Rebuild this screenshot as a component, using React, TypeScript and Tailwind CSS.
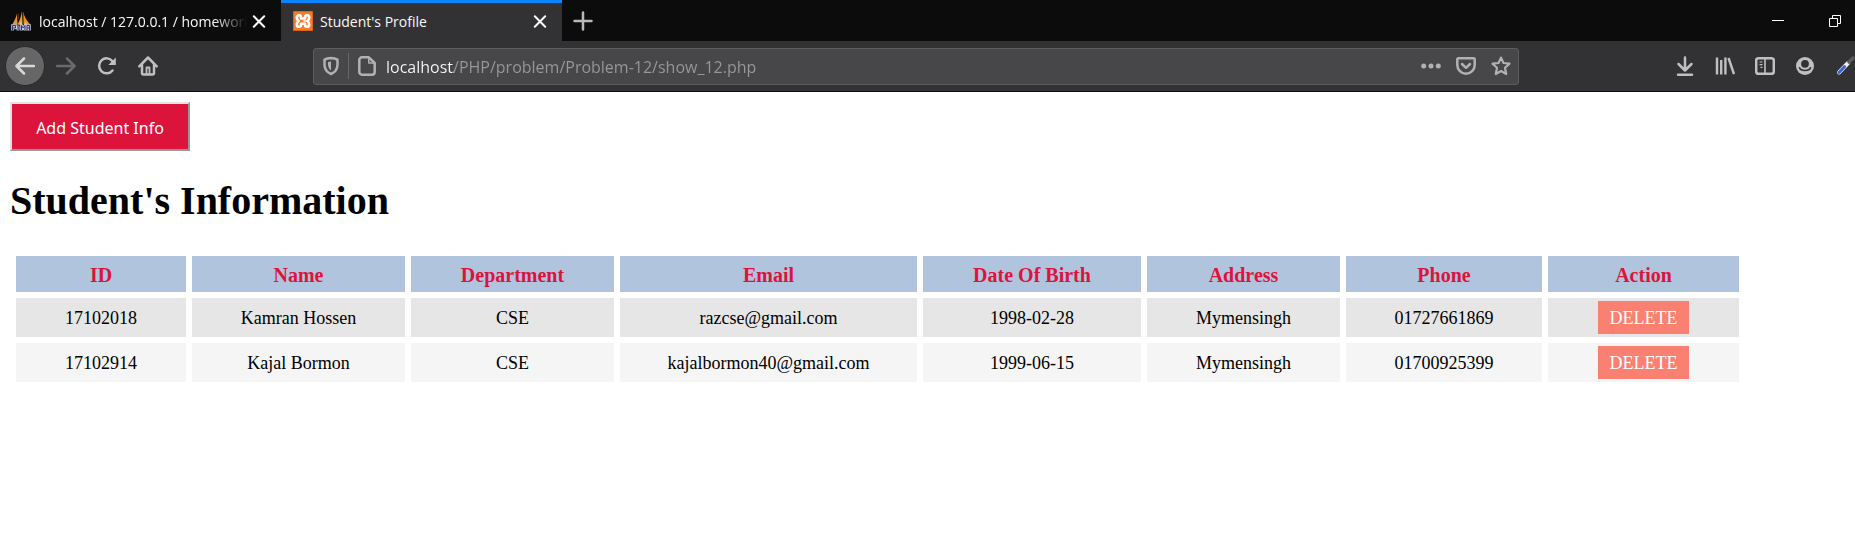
import React from "react";

type IconProps = { children: React.ReactNode; size?: string };

function Icon({ children, size = "size-5" }: IconProps) {
  return (
    <svg
      viewBox="0 0 20 20"
      className={`${size} shrink-0`}
      fill="none"
      stroke="currentColor"
      strokeWidth="2.5"
      strokeLinecap="round"
      strokeLinejoin="round"
      aria-hidden="true"
    >
      {children}
    </svg>
  );
}

function CloseIcon() {
  return (
    <Icon>
      <path d="M4.8 5.3 15.2 15.7M15.2 5.3 4.8 15.7" strokeWidth="2" />
    </Icon>
  );
}

function SailsLogo() {
  return (
    <svg viewBox="0 0 20 20" className="size-5 shrink-0" aria-hidden="true">
      <path d="M5.8 2.8 6.6 13.5H1.2C3.4 10 5 7 5.8 2.8Z" fill="#e8963a" />
      <path d="M10.8 0 11.6 13.8H6.4C9 9 10.4 5 10.8 0Z" fill="#f5a02c" />
      <path d="M12.3 1.5C13.5 6 16 10 19.3 13.500L12.8 13.800Z" fill="#f08c1a" />
      <path d="M7 2.5 7.4 8M12.2 1 12.4 12.5" stroke="#a9651c" strokeWidth=".6" />
      <g fill="none" stroke="#c6c8e4" strokeWidth="2.6">
        <path d="M1.5 19.5V14.5H4.5V17H2M7 19.5V14.5M7 17H9.5M10.5 19.5V14.5L12.3 17 14 14.5V19.5M16 19.5V14.5H18.5V19.5M16 17H18.5" />
      </g>
      <g fill="none" stroke="#33345c" strokeWidth="1">
        <path d="M1.5 19.5V14.5H4.5V17H2M7 19.5V14.5M7 17H9.5M10.5 19.5V14.5L12.3 17 14 14.5V19.5M16 19.5V14.5H18.5V19.5M16 17H18.5" />
      </g>
    </svg>
  );
}

function XamppLogo() {
  return (
    <svg viewBox="0 0 20 20" className="size-5 shrink-0" aria-hidden="true">
      <rect width="20" height="20" rx="1" fill="#d9651b" />
      <rect x="1" y="1" width="18" height="18" rx="1" fill="#f57c2b" />
      <g fill="none" stroke="#fff" strokeWidth="2.6" strokeLinecap="round" strokeLinejoin="round">
        <path d="M8 7.5V6.300C8 4.900 7.200 4.300 6 4.300 4.600 4.300 3.800 5.200 3.800 6.600 3.800 8.300 4.600 9.300 5.600 10 4.600 10.700 3.800 11.700 3.800 13.400 3.800 14.800 4.600 15.700 6 15.700 7.200 15.700 8 15.100 8 13.700V12.800H12V13.700C12 15.100 12.800 15.700 14 15.700 15.400 15.700 16.200 14.800 16.200 13.400 16.200 11.700 15.400 10.700 14.400 10 15.400 9.300 16.200 8.300 16.200 6.600 16.200 5.200 15.400 4.300 14 4.300 12.800 4.300 12 4.900 12 6.300V7.500Z" />
        <path d="M11 10H14" strokeWidth="1.600" />
      </g>
    </svg>
  );
}

function TabStrip() {
  return (
    <div className="flex h-[41px] bg-[#0c0c0d] text-[14px] text-[#f9f9fa]">
      <div className="flex w-[281px] shrink-0 items-center pr-3 pl-[11px]">
        <SailsLogo />
        <a
          href="#phpmyadmin"
          className="ml-2 w-[208px] overflow-hidden pt-0.5 whitespace-nowrap [mask-image:linear-gradient(to_right,black_84%,transparent)]"
        >
          localhost / 127.0.0.1 / homework
        </a>
        <button type="button" aria-label="Close tab" className="ml-auto">
          <CloseIcon />
        </button>
      </div>
      <div className="flex w-[281px] shrink-0 items-center border-t-[3px] border-[#0a84ff] bg-[#323234] pr-3 pb-[3px] pl-3">
        <XamppLogo />
        <a href="#profile" className="ml-[7px] pt-0.5 whitespace-nowrap">
          Student's Profile
        </a>
        <button type="button" aria-label="Close tab" className="ml-auto">
          <CloseIcon />
        </button>
      </div>
      <button
        type="button"
        aria-label="New tab"
        className="flex w-[41px] shrink-0 items-center justify-center text-[#b9b9ba]"
      >
        <Icon>
          <path d="M10 1.5V18.5M1.5 10H18.5" />
        </Icon>
      </button>
      <div className="ml-auto flex overflow-hidden">
        <button type="button" aria-label="Minimize" className="flex w-14 items-center justify-center text-white">
          <svg viewBox="0 0 12 12" className="size-3" aria-hidden="true">
            <path d="M0 5.5H12" stroke="currentColor" />
          </svg>
        </button>
        <button type="button" aria-label="Restore" className="flex w-[49px] items-center justify-center pl-2 text-white">
          <svg viewBox="0 0 12 12" className="size-3" fill="none" stroke="currentColor" aria-hidden="true">
            <path d="M.5 3.5H8.5V11.5H.5ZM3.5 3.5V.5H11.5V8.5H8.5" />
          </svg>
        </button>
      </div>
    </div>
  );
}

function ToolButton({
  label,
  width = "w-10",
  children,
}: {
  label: string;
  width?: string;
  children: React.ReactNode;
}) {
  return (
    <button
      type="button"
      aria-label={label}
      className={`${width} flex h-10 shrink-0 items-center justify-center`}
    >
      <Icon>{children}</Icon>
    </button>
  );
}

function AddressBar() {
  return (
    <div className="flex h-[37px] min-w-0 flex-1 items-center rounded-[3px] border border-[#5c5c5f] bg-[#474749] text-[#b1b1b2]">
      <ToolButton label="Tracking protection" width="w-[34px]">
        <path d="M10 2C12.5 2.2 14.7 2.7 16.500 3.6V8.5C16.500 13 14 16.3 10 18 6 16.3 3.500 13 3.500 8.500V3.600C5.300 2.700 7.500 2.200 10 2Z" />
        <path d="M10 5.500V14.500C8 12.800 7 10.800 7 8.500V6Z" fill="currentColor" stroke="none" />
      </ToolButton>
      <div className="h-[26px] w-px shrink-0 bg-[#66666b]" />
      <ToolButton label="Site information" width="w-9">
        <path d="M5 1.3H11.8L17.7 7V16A2.7 2.7 0 0 1 15 18.7H5A2.7 2.7 0 0 1 2.3 16V4A2.7 2.7 0 0 1 5 1.3Z" />
        <path d="M11.8 1.5V7H17.5" strokeWidth="1.5" />
      </ToolButton>
      <input
        type="text"
        aria-label="Address"
        defaultValue="localhost/PHP/problem/Problem-12/show_12.php"
        className="min-w-0 flex-1 bg-[linear-gradient(to_right,#f9f9fa_69px,#98989a_69px)] bg-clip-text pt-0.5 pl-px text-[16px] text-transparent caret-white outline-none"
      />
      <ToolButton label="Page actions" width="w-[35px]">
        <g fill="currentColor" stroke="none">
          <circle cx="2.7" cy="10" r="2.5" />
          <circle cx="10" cy="10" r="2.5" />
          <circle cx="17.3" cy="10" r="2.5" />
        </g>
      </ToolButton>
      <ToolButton label="Save to Pocket" width="w-[35px]">
        <path d="M2.3 2.3H17.7A1 1 0 0 1 18.7 3.3V9A8.7 8.7 0 0 1 1.3 9V3.3A1 1 0 0 1 2.3 2.3Z" />
        <path d="M6 8 10 11.8 14 8" />
      </ToolButton>
      <ToolButton label="Bookmark" width="w-[35px]">
        <path
          d="M10 1.6 12.5 7 18.5 7.7 14 11.8 15.2 18 10 15 4.8 18 6 11.8 1.5 7.7 7.5 7Z"
          strokeWidth="2.2"
        />
      </ToolButton>
    </div>
  );
}

function Toolbar() {
  return (
    <div className="flex h-[51px] items-center border-b border-[#0c0c0d] bg-[#323234] text-[#c0c0c1]">
      <div className="flex w-[313px] shrink-0 gap-px pl-[5px]">
        <button
          type="button"
          aria-label="Back"
          className="flex size-10 items-center justify-center rounded-full border border-[#29292b] bg-[#666667] text-[#d8d8d9]"
        >
          <Icon>
            <path d="M19 10H2M9 2.5 1.5 10 9 17.5" />
          </Icon>
        </button>
        <div className="flex text-[#6a6a6b]">
          <ToolButton label="Forward">
            <path d="M1 10H18M11 2.5 18.5 10 11 17.5" />
          </ToolButton>
        </div>
        <ToolButton label="Reload">
          <path d="M15.5 14.5A7.5 7.5 0 1 1 15.5 5.2" />
          <path d="M18.8 1.5V9H11.3Z" fill="currentColor" stroke="none" />
        </ToolButton>
        <ToolButton label="Home">
          <path d="M1.3 10.3 10 1.5 18.7 10.3" />
          <path d="M4 9V17A1.5 1.5 0 0 0 5.5 18.5H14.5A1.5 1.5 0 0 0 16 17V9" />
          <path d="M8.5 18V11.5H11.5V18" strokeWidth="1.8" />
        </ToolButton>
      </div>
      <AddressBar />
      <div className="flex w-[336px] shrink-0 overflow-hidden pl-[146px]">
        <ToolButton label="Downloads">
          <path d="M10 1.5V14M3.5 8 10 14.5 16.5 8M3 18.7H17" />
        </ToolButton>
        <ToolButton label="Library">
          <path d="M2 1.500V18.500M6.200 4V18.500M10.400 1.500V18.500M13.500 2 19 18" strokeWidth="2.4" strokeLinecap="butt" />
        </ToolButton>
        <ToolButton label="Sidebars">
          <rect x="1.2" y="2.2" width="17.6" height="15.6" rx="2.4" />
          <path d="M10 2.5V17.5" strokeWidth="1.6" />
          <path d="M4.5 6H7.5M4.5 8.7H7.5M5.5 11.4H7.5" strokeWidth="1.2" strokeLinecap="butt" />
        </ToolButton>
        <ToolButton label="Account">
          <circle cx="10" cy="10" r="9" fill="currentColor" stroke="none" />
          <circle cx="10" cy="7.800" r="3.900" fill="#323234" stroke="none" />
          <path d="M4.500 11.800C5.800 15.400 14.200 15.400 15.500 11.800" stroke="#323234" strokeWidth="1.700" />
        </ToolButton>
        <ToolButton label="Color picker">
          <path d="M4 16.500 13 7" stroke="#eef1fa" strokeWidth="4" />
          <path d="M4 16.500 9.500 10.700" stroke="#4064cf" strokeWidth="3" />
          <path d="M14 6 18 2" stroke="#5b5b5d" strokeWidth="3.500" />
        </ToolButton>
      </div>
    </div>
  );
}

const columns = [
  { title: "ID", width: "w-[170px]" },
  { title: "Name", width: "w-[213px]" },
  { title: "Department", width: "w-[203px]" },
  { title: "Email", width: "w-[297px]" },
  { title: "Date Of Birth", width: "w-[218px]" },
  { title: "Address", width: "w-[193px]" },
  { title: "Phone", width: "w-[196px]" },
  { title: "Action", width: "w-[191px]" },
];

const students = [
  ["17102018", "Kamran Hossen", "CSE", "razcse@gmail.com", "1998-02-28", "Mymensingh", "01727661869"],
  ["17102914", "Kajal Bormon", "CSE", "kajalbormon40@gmail.com", "1999-06-15", "Mymensingh", "01700925399"],
];

function StudentTable() {
  return (
    <table className="border-separate border-spacing-[6px] text-center">
      <thead>
        <tr className="h-9 bg-[#b0c4de] text-[20px] leading-6 text-[#dc143c]">
          {columns.map((column) => (
            <th key={column.title} scope="col" className={`${column.width} p-0 pt-px font-bold`}>
              {column.title}
            </th>
          ))}
        </tr>
      </thead>
      <tbody className="text-[18px] leading-6 text-black">
        {students.map((student) => (
          <tr key={student[0]} className="bg-[#f5f5f5] odd:bg-[#e6e6e6]">
            {student.map((value, index) => (
              <td key={index} className="p-0">
                {value}
              </td>
            ))}
            <td className="p-[3px]">
              <button type="button" className="mx-auto block h-[33px] w-[91px] bg-[#fa8072] text-white">
                DELETE
              </button>
            </td>
          </tr>
        ))}
      </tbody>
    </table>
  );
}

export default function App() {
  return (
    <div className="min-h-screen bg-white">
      <header className="font-['Open_Sans',sans-serif]">
        <TabStrip />
        <Toolbar />
      </header>
      <main className="px-[10px] pt-[10px] font-['Liberation_Serif',serif] text-black">
        <button
          type="button"
          className="h-[49px] w-[180px] border-2 border-t-[#e3e3e3] border-r-[#979797] border-b-[#979797] border-l-[#e3e3e3] bg-[#dc143c] pt-0.5 font-['Noto_Sans',sans-serif] text-[16px] whitespace-nowrap text-white"
        >
          Add Student Info
        </button>
        <h1 className="mt-[26px] text-[40px] leading-[48px] font-bold">Student's Information</h1>
        <div className="overflow-x-auto pt-[25px]">
          <StudentTable />
        </div>
      </main>
    </div>
  );
}
